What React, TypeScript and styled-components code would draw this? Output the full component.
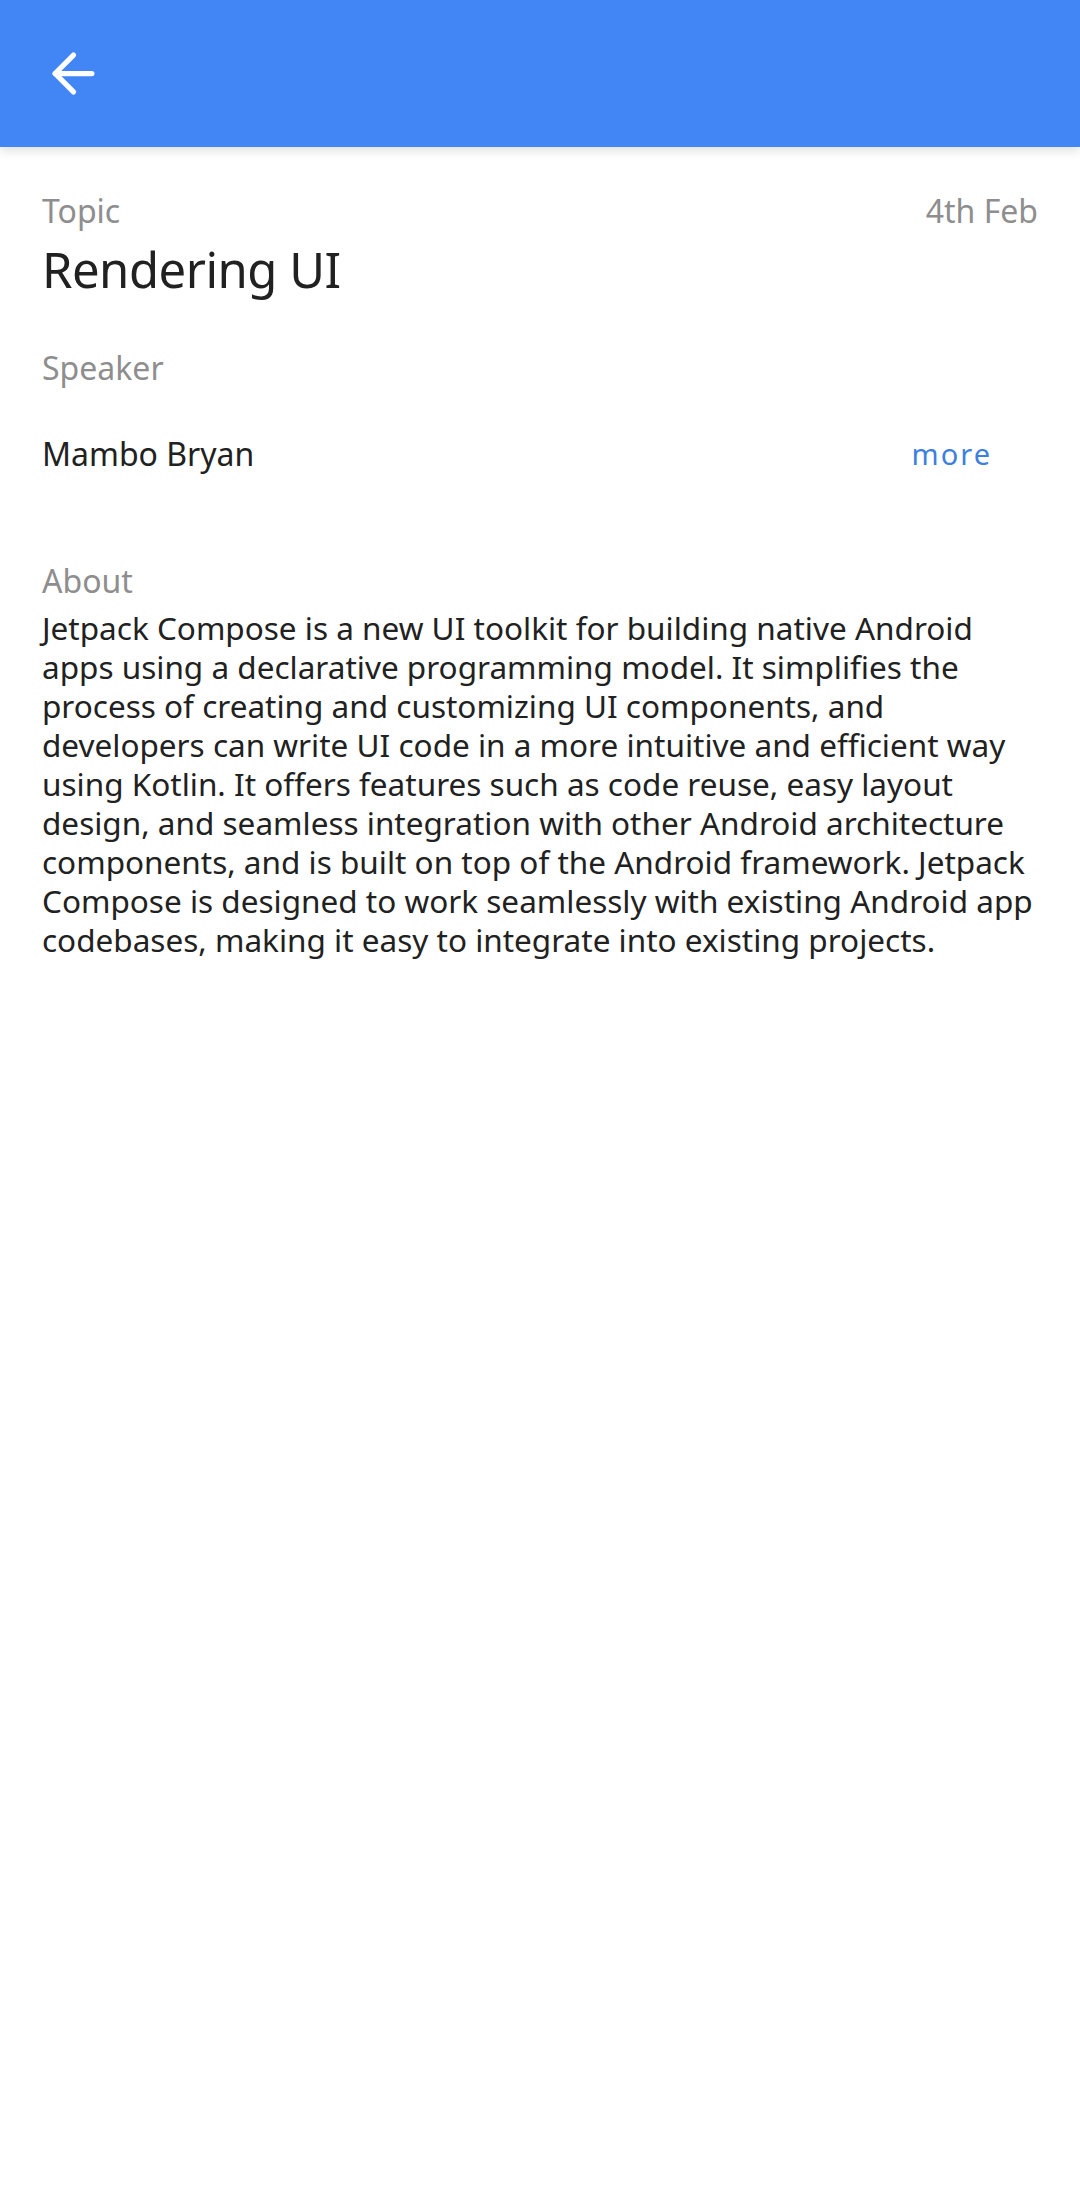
import styled, { createGlobalStyle } from "styled-components";

const GlobalStyle = createGlobalStyle`
    html, body {
        margin: 0;
        padding: 0;
        background: #fff;
    }
    body {
        font-family: "Noto Sans", "Open Sans", sans-serif;
        color: #212121;
    }
`;

const aboutLines = [
    "Jetpack Compose is a new UI toolkit for building native Android",
    "apps using a declarative programming model. It simplifies the",
    "process of creating and customizing UI components, and",
    "developers can write UI code in a more intuitive and efficient way",
    "using Kotlin. It offers features such as code reuse, easy layout",
    "design, and seamless integration with other Android architecture",
    "components, and is built on top of the Android framework. Jetpack",
    "Compose is designed to work seamlessly with existing Android app",
    "codebases, making it easy to integrate into existing projects.",
];

const BackIcon = () => (
    <svg width="63" height="63" viewBox="0 0 24 24" fill="none" stroke="#fff" strokeWidth="2" strokeLinecap="round" strokeLinejoin="round">
        <path d="M19 12H5" />
        <path d="M12 19l-7-7 7-7" />
    </svg>
);

export default function App() {
    return (
        <Page>
            <GlobalStyle />
            <TopBar>
                <BackButton aria-label="back">
                    <BackIcon />
                </BackButton>
            </TopBar>
            <Content>
                <HeadRow>
                    <Label>Topic</Label>
                    <DateText>4th Feb</DateText>
                </HeadRow>
                <Title>Rendering UI</Title>
                <Label $gap={43}>Speaker</Label>
                <SpeakerRow>
                    <SpeakerName>Mambo Bryan</SpeakerName>
                    <MoreButton>more</MoreButton>
                </SpeakerRow>
                <Label $gap={79}>About</Label>
                <About>
                    {aboutLines.map((line, i) => (
                        <AboutLine key={i}>{line}</AboutLine>
                    ))}
                </About>
            </Content>
        </Page>
    );
}

const Page = styled.div`
    min-height: 2186px;
    background: #fff;
`;

const TopBar = styled.header`
    height: 147px;
    background: #4285f4;
    display: flex;
    align-items: center;
    padding-left: 42px;
    box-shadow: 0 3px 10px rgba(0, 0, 0, 0.14);
    position: relative;
`;

const BackButton = styled.button`
    border: none;
    background: none;
    padding: 0;
    display: flex;
    cursor: pointer;
`;

const Content = styled.main`
    padding: 40px 42px 0 42px;
`;

const HeadRow = styled.div`
    display: flex;
    justify-content: space-between;
    align-items: center;
`;

const Label = styled.div<{ $gap?: number }>`
    font-size: 32px;
    line-height: 48px;
    color: #8e8e8e;
    margin-top: ${(p) => p.$gap ?? 0}px;
`;

const DateText = styled.div`
    font-size: 32px;
    line-height: 48px;
    color: #8e8e8e;
`;

const Title = styled.h1`
    margin: 2px 0 0;
    font-size: 49px;
    line-height: 64px;
    letter-spacing: -0.5px;
    font-weight: 400;
    color: #212121;
`;

const SpeakerRow = styled.div`
    display: flex;
    align-items: center;
    justify-content: space-between;
    margin-top: 38px;
    padding-right: 46px;
`;

const SpeakerName = styled.div`
    font-size: 32px;
    line-height: 48px;
    color: #212121;
`;

const MoreButton = styled.button`
    border: none;
    background: none;
    padding: 0;
    font-family: inherit;
    font-size: 29px;
    line-height: 48px;
    letter-spacing: 2px;
    color: #3d7fe0;
    cursor: pointer;
`;

const About = styled.p`
    margin: 3px 0 0;
    font-size: 31.5px;
    line-height: 39px;
    color: #212121;
`;

const AboutLine = styled.span`
    display: block;
    white-space: nowrap;
`;
